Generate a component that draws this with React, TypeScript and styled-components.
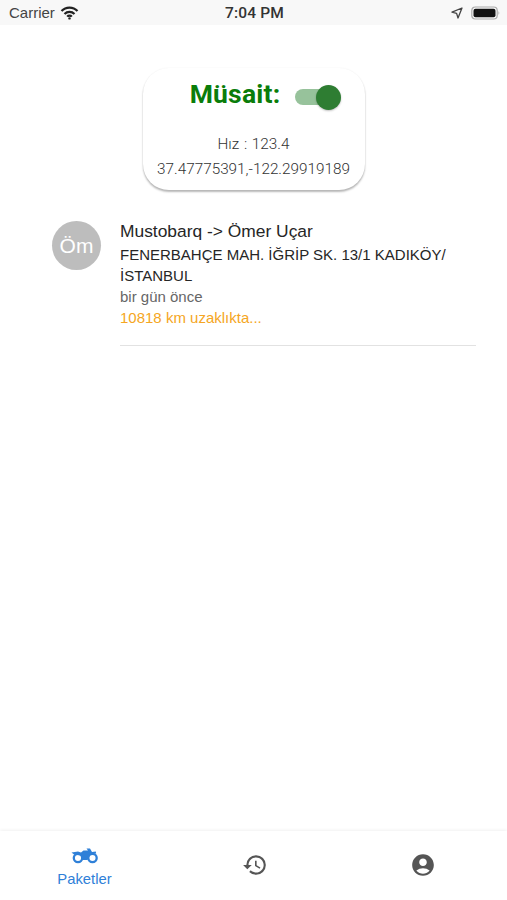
import React from 'react';
import styled, { createGlobalStyle } from 'styled-components';
import { MdHistory, MdAccountCircle } from 'react-icons/md';

const GlobalStyle = createGlobalStyle`
  html, body {
    margin: 0;
    padding: 0;
    background: #fff;
  }
  body {
    font-family: 'Liberation Sans', Arial, sans-serif;
  }
`;

const Screen = styled.div`
  display: flex;
  flex-direction: column;
  height: 900px;
  overflow: hidden;
  width: 507px;
`;

const StatusBar = styled.div`
  align-items: center;
  background: #f8f8f8;
  color: #444;
  display: grid;
  flex: none;
  grid-template-columns: 1fr auto 1fr;
  height: 25px;
  padding: 0 6px 0 9px;
`;

const Carrier = styled.div`
  align-items: center;
  display: flex;
  font-size: 15px;
  gap: 5px;
`;

const Clock = styled.div`
  color: #333;
  font-family: Roboto, sans-serif;
  font-size: 15.5px;
  font-weight: 500;
  letter-spacing: 0.2px;
  margin-left: -1px;
`;

const StatusRight = styled.div`
  align-items: center;
  display: flex;
  gap: 8px;
  justify-content: flex-end;
`;

const Content = styled.main`
  display: flex;
  flex: 1;
  flex-direction: column;
`;

const CardWrap = styled.div`
  display: flex;
  justify-content: center;
  padding-top: 43px;
`;

const Card = styled.section`
  align-items: center;
  background: #fff;
  border-radius: 26px;
  box-shadow: 0 2px 2px rgba(0, 0, 0, 0.28), 0 0 2px rgba(0, 0, 0, 0.06);
  display: flex;
  flex-direction: column;
  height: 122px;
  width: 222px;
`;

const AvailableRow = styled.div`
  align-items: center;
  display: flex;
  gap: 15px;
  height: 32px;
  margin-top: 9px;
  padding-left: 20px;
`;

const AvailableLabel = styled.div`
  color: #0a7d0a;
  font-family: Roboto, sans-serif;
  font-size: 26.5px;
  font-weight: 700;
  letter-spacing: 0.2px;
`;

const Track = styled.div`
  background: #97c29b;
  border-radius: 8px;
  height: 16px;
  margin-top: 8px;
  position: relative;
  width: 42px;
`;

const Thumb = styled.div`
  background: #2e7d32;
  border-radius: 50%;
  box-shadow: 0 1px 2px rgba(0, 0, 0, 0.25);
  height: 25px;
  position: absolute;
  right: -4px;
  top: -4.5px;
  width: 25px;
`;

const CardLine = styled.div<{ $top?: number }>`
  color: #333;
  font-family: Roboto, sans-serif;
  font-size: 15.3px;
  font-weight: 300;
  line-height: 25px;
  margin-top: ${(p) => p.$top ?? 0}px;
  white-space: nowrap;
  word-spacing: 1px;
`;

const PackageRow = styled.article`
  display: flex;
  gap: 19px;
  margin-top: 31px;
  padding: 0 31px 0 52px;
`;

const Avatar = styled.div`
  align-items: center;
  background: #bdbdbd;
  border-radius: 50%;
  color: #fff;
  display: flex;
  flex: none;
  font-size: 21px;
  height: 49px;
  justify-content: center;
  width: 49px;
`;

const PackageBody = styled.div`
  border-bottom: 1px solid #e2e2e2;
  flex: 1;
  padding-bottom: 17px;
`;

const Title = styled.div`
  color: #262626;
  font-size: 17.4px;
  line-height: 21px;
`;

const Address = styled.div`
  color: #262626;
  font-size: 15px;
  line-height: 21px;
  margin-top: 2px;
`;

const Meta = styled.div<{ $color: string }>`
  color: ${(p) => p.$color};
  font-size: 15px;
  line-height: 20px;
  margin-top: 1px;
`;

const TabBar = styled.nav`
  background: #fff;
  box-shadow: 0 -1px 3px rgba(0, 0, 0, 0.06);
  display: grid;
  flex: none;
  grid-template-columns: repeat(3, 1fr);
  height: 69px;
`;

const Tab = styled.div<{ $active?: boolean }>`
  align-items: center;
  color: ${(p) => (p.$active ? '#2f80d8' : '#555')};
  display: flex;
  flex-direction: column;
  font-size: 14.8px;
  justify-content: ${(p) => (p.$active ? 'flex-start' : 'center')};
  padding-top: ${(p) => (p.$active ? 17 : 0)}px;
  padding-bottom: ${(p) => (p.$active ? 0 : 2)}px;
`;

const TabLabel = styled.span`
  line-height: 18px;
  margin-top: 6px;
`;

const HistoryIcon = styled(MdHistory)`
  margin-left: 2px;
`;

const MotorbikeIcon: React.FC = () => (
  <svg width="28" height="16" viewBox="0 0 28 16">
    <circle cx="7" cy="10" r="4.2" fill="none" stroke="currentColor" strokeWidth="2.3" />
    <circle cx="21.5" cy="10" r="4.2" fill="none" stroke="currentColor" strokeWidth="2.3" />
    <path
      d="M0.5 4.5 L7 3.6 L10 4.6 L12.5 2.6 L17 2.4 L15.5 0.4 L19 0.4 L21 4 L24.8 3.4 L25.2 5.6 L19.4 6.2 L16.5 12 L11 12 L10 7.4 L3 6.6 Z"
      fill="currentColor"
    />
  </svg>
);

const App: React.FC = () => (
  <Screen>
    <GlobalStyle />
    <StatusBar>
      <Carrier>
        Carrier
        <svg width="19" height="14" viewBox="0 0 19 14" fill="none" stroke="#222" strokeWidth="2.2">
          <path d="M1.5 5 a11 11 0 0 1 16 0" />
          <path d="M4.5 8 a7 7 0 0 1 10 0" />
          <path d="M7.2 10.6 a3 3 0 0 1 4.6 0" />
          <circle cx="9.5" cy="12.4" r="1.2" fill="#222" stroke="none" />
        </svg>
      </Carrier>
      <Clock>7:04 PM</Clock>
      <StatusRight>
        <svg width="12" height="12" viewBox="0 0 12 12" fill="none" stroke="#444" strokeWidth="1.3" strokeLinejoin="round">
          <path d="M11 1 L1 5.2 L5.6 6.4 L7 11 Z" />
        </svg>
        <svg width="30" height="14" viewBox="0 0 30 14">
          <rect x="0.8" y="1" width="25.4" height="12" rx="3.5" fill="none" stroke="#aaa" strokeWidth="1.2" />
          <rect x="2.5" y="2.8" width="22" height="8.4" rx="2" fill="#111" />
          <path d="M27.5 5 a3 3 0 0 1 0 4z" fill="#aaa" />
        </svg>
      </StatusRight>
    </StatusBar>
    <Content>
      <CardWrap>
        <Card>
          <AvailableRow>
            <AvailableLabel>Müsait:</AvailableLabel>
            <Track>
              <Thumb />
            </Track>
          </AvailableRow>
          <CardLine $top={23}>Hız : 123.4</CardLine>
          <CardLine>37.47775391,-122.29919189</CardLine>
        </Card>
      </CardWrap>
      <PackageRow>
        <Avatar>Öm</Avatar>
        <PackageBody>
          <Title>Mustobarq -&gt; Ömer Uçar</Title>
          <Address>FENERBAHÇE MAH. İĞRİP SK. 13/1 KADIKÖY/ İSTANBUL</Address>
          <Meta $color="#666">bir gün önce</Meta>
          <Meta $color="#f5a623">10818 km uzaklıkta...</Meta>
        </PackageBody>
      </PackageRow>
    </Content>
    <TabBar>
      <Tab $active>
        <MotorbikeIcon />
        <TabLabel>Paketler</TabLabel>
      </Tab>
      <Tab>
        <HistoryIcon size={26} />
      </Tab>
      <Tab>
        <MdAccountCircle size={26} />
      </Tab>
    </TabBar>
  </Screen>
);

export default App;
